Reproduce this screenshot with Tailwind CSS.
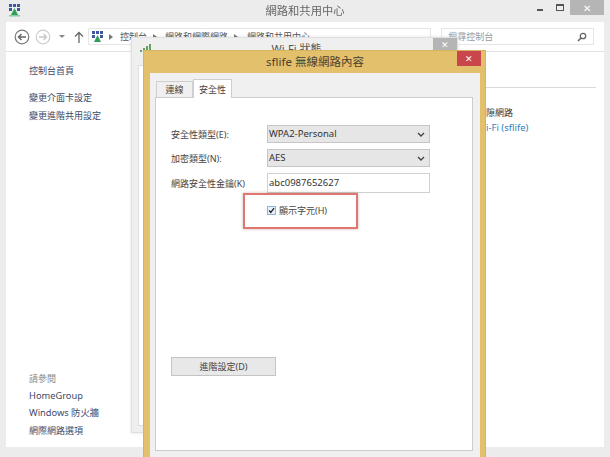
<!DOCTYPE html>
<html lang="zh-Hant">
<head>
    <meta charset="UTF-8">
    <title>網路和共用中心</title>
    <script src="https://cdn.jsdelivr.net/npm/@tailwindcss/browser@4"></script>
</head>
<body class="w-[610px] h-[457px] overflow-hidden bg-[#ececec] font-['Noto_Sans','Noto_Sans_CJK_TC',sans-serif] text-[10px] leading-none text-[#3c3c3c]">
    <div class="relative w-[610px] h-[457px] overflow-hidden blur-[0.35px]">
        <!-- main window -->
        <div class="flex flex-col h-full px-[6px]">
            <div class="relative flex items-center justify-center h-[22px] text-[11.3px] text-[#666]">
                <svg class="absolute left-[2px] top-[3px]" width="12" height="14" viewBox="0 0 12 14">
                    <rect x="1" y="1" width="3" height="3" fill="#3f56a8"/><rect x="5" y="1" width="3" height="3" fill="#3f56a8"/><rect x="9" y="1" width="3" height="3" fill="#3f56a8"/>
                    <rect x="1" y="5" width="3" height="3" fill="#3f56a8"/><rect x="9" y="5" width="3" height="3" fill="#3f56a8"/>
                    <path d="M6.5 5 L10 12 H3 Z" fill="#2f9e5a"/><rect x="1" y="12" width="11" height="1.5" fill="#8cc8a0"/>
                </svg>
                <span>網路和共用中心</span>
                <div class="absolute right-0 top-0 flex items-start">
                    <div class="w-[20px] h-[15px] flex items-center justify-center"><div class="w-[6px] h-[2px] mt-[5px] bg-[#555]"></div></div>
                    <div class="w-[20px] h-[15px] flex items-center justify-center"><div class="w-[8px] h-[7px] border border-[#555] border-t-2"></div></div>
                    <div class="w-[34px] h-[15px] bg-[#b5b5b5] flex items-center justify-center text-white text-[10px]">✕</div>
                </div>
            </div>
            <div class="flex items-center h-[30px] bg-white border-b border-[#e2e2e2] pl-[8px] pr-[10px]">
                <svg width="16" height="16" viewBox="0 0 16 16" fill="none"><circle cx="8" cy="8" r="6.8" stroke="#777" stroke-width="1.2"/><path d="M12 8H5M7.5 5 4.5 8l3 3" stroke="#666" stroke-width="1.4"/></svg>
                <svg class="ml-[5px]" width="16" height="16" viewBox="0 0 16 16" fill="none"><circle cx="8" cy="8" r="6.8" stroke="#ccc" stroke-width="1.2"/><path d="M4 8h7M8.5 5l3 3-3 3" stroke="#c8c8c8" stroke-width="1.4"/></svg>
                <svg class="ml-[8px]" width="7" height="4" viewBox="0 0 7 4"><path d="M0 0h6L3 3z" fill="#888"/></svg>
                <svg class="ml-[8px]" width="10" height="12" viewBox="0 0 10 12" fill="none"><path d="M5 12V2M1 5.5 5 1.5l4 4" stroke="#666" stroke-width="1.3"/></svg>
                <div class="flex items-center ml-[4px] w-[344px] h-[17px] border border-[#e6e6e6] text-[9px] text-[#555]">
                    <svg class="ml-[2px]" width="12" height="14" viewBox="0 0 12 14">
                        <rect x="1" y="1" width="3" height="3" fill="#3f56a8"/><rect x="5" y="1" width="3" height="3" fill="#3f56a8"/><rect x="9" y="1" width="3" height="3" fill="#3f56a8"/>
                        <rect x="1" y="5" width="3" height="3" fill="#3f56a8"/><rect x="9" y="5" width="3" height="3" fill="#3f56a8"/>
                        <path d="M6.5 5 L10 12 H3 Z" fill="#2f9e5a"/>
                    </svg>
                    <svg class="ml-[6px]" width="4" height="6" viewBox="0 0 4 6"><path d="M0 0l4 3-4 3z" fill="#777"/></svg>
                    <span class="ml-[7px]">控制台</span>
                    <svg class="ml-[6px]" width="4" height="6" viewBox="0 0 4 6"><path d="M0 0l4 3-4 3z" fill="#777"/></svg>
                    <span class="ml-[8px]">網路和網際網路</span>
                    <svg class="ml-[6px]" width="4" height="6" viewBox="0 0 4 6"><path d="M0 0l4 3-4 3z" fill="#777"/></svg>
                    <span class="ml-[9px]">網路和共用中心</span>
                </div>
                <div class="flex items-center justify-between ml-[10px] w-[153px] h-[17px] border border-[#e6e6e6] pl-[6px] pr-[6px] text-[9px] text-[#999]">
                    <span>搜尋控制台</span>
                    <svg width="10" height="10" viewBox="0 0 10 10" fill="none"><circle cx="6" cy="4" r="2.7" stroke="#666" stroke-width="1.3"/><path d="M4 6 1 9" stroke="#666" stroke-width="1.6"/></svg>
                </div>
            </div>
            <div class="relative flex-1 flex flex-col bg-white pl-[23px] pt-[14px] pb-[11px] text-[9px] text-[#3d4a6b]">
                <span class="h-[10px]">控制台首頁</span>
                <span class="h-[10px] mt-[17px]">變更介面卡設定</span>
                <span class="h-[10px] mt-[8px]">變更進階共用設定</span>
                <span class="h-[10px] mt-auto text-[#888]">請參閱</span>
                <span class="h-[10px] mt-[7px] text-[9.3px]">HomeGroup</span>
                <span class="h-[10px] mt-[7px] text-[9.3px]">Windows 防火牆</span>
                <span class="h-[10px] mt-[8px]">網際網路選項</span>
                <!-- bits of the main content showing right of the dialog -->
                <div class="absolute left-[480px] top-[35px] w-[110px] h-px bg-[#d9d9d9]"></div>
                <span class="absolute left-[480px] top-[56px] text-[#333]">隙網路</span>
                <span class="absolute left-[480px] top-[71px] text-[9.5px] text-[#2f7fc0]">i-Fi (sflife)</span>
            </div>
            <div class="h-[10px] shrink-0"></div>
        </div>

        <!-- Wi-Fi status window -->
        <div class="absolute left-[131px] top-[37px] w-[327px] h-[396px] bg-[#efefef] border border-[#e0e0e0] shadow-[0_0_3px_rgba(0,0,0,0.12)]">
            <div class="flex justify-center pt-[5px] text-[11px] text-[#555] pl-[4px]">Wi-Fi 狀態</div>
            <div class="absolute right-0 top-0 w-[24px] h-[13px] bg-[#b5b5b5] flex items-center justify-center text-white text-[9px]">✕</div>
            <div class="absolute left-[6px] top-[27px] bottom-[6px] w-[300px] bg-white border border-[#dedede]"></div>
            <svg class="absolute left-[8px] top-[5px]" width="12" height="10" viewBox="0 0 12 10" fill="none">
                <path d="M1 9V7M4 9V5M7 9V3M10 9V1" stroke="#3d8f3d" stroke-width="1.6"/>
            </svg>
        </div>

        <!-- sflife dialog -->
        <div class="absolute left-[143px] top-[50px] w-[343px] h-[420px] flex flex-col bg-[#e2c06c] border border-[#d6b35f] pl-[6px] pr-[5px]">
            <div class="relative flex items-center justify-center h-[22px] shrink-0 text-[11.5px] text-[#4a4030]">
                <span>sflife 無線網路內容</span>
                <div class="absolute right-[-1px] top-0 w-[24px] h-[15px] bg-[#c9474a] flex items-center justify-center text-white text-[9px]">✕</div>
            </div>
            <div class="flex-1 flex flex-col bg-[#f0f0f0] pl-[5px] pr-[7px] pt-[6px] text-[9px] text-[#444]">
                <div class="flex items-end h-[18px] pl-[1px]">
                    <div class="flex items-center justify-center w-[37px] h-[16px] bg-[#f0f0f0] border border-b-0 border-[#cfcfcf]">連線</div>
                    <div class="relative z-10 flex items-center justify-center w-[39px] h-[19px] mb-[-1px] bg-white border border-b-0 border-[#cfcfcf]">安全性</div>
                </div>
                <div class="relative h-[354px] bg-white border border-[#cccccc] pl-[15px] pr-[42px] pt-[27px]">
                    <div class="grid grid-cols-[96px_1fr] items-center gap-y-[6px]">
                        <span>安全性類型(E):</span>
                        <div class="flex items-center justify-between h-[18px] bg-[#e6e6e6] border border-[#c6c6c6] px-[1px] pr-[4px] text-[9.5px] text-[#333]">
                            <span>WPA2-Personal</span>
                            <svg width="8" height="5" viewBox="0 0 8 5" fill="none"><path d="M1 1l3 3 3-3" stroke="#444" stroke-width="1.4"/></svg>
                        </div>
                        <span>加密類型(N):</span>
                        <div class="flex items-center justify-between h-[18px] bg-[#e6e6e6] border border-[#c6c6c6] px-[1px] pr-[4px] text-[9.5px] text-[#333]">
                            <span>AES</span>
                            <svg width="8" height="5" viewBox="0 0 8 5" fill="none"><path d="M1 1l3 3 3-3" stroke="#444" stroke-width="1.4"/></svg>
                        </div>
                        <span>網路安全性金鑰(K)</span>
                        <div class="flex items-center h-[20px] bg-white border border-[#d0d0d0] px-[1px] text-[9.5px] text-[#333]">abc0987652627</div>
                    </div>
                    <div class="flex items-center ml-[96px] mt-[13px]">
                        <div class="flex items-center justify-center w-[9px] h-[9px] bg-[#e8f1fb] border border-[#8fb4dc]">
                            <svg width="9" height="9" viewBox="0 0 9 9" fill="none"><path d="M1.5 4.5 3.6 7 7.8 1.5" stroke="#222" stroke-width="1.7"/></svg>
                        </div>
                        <span class="ml-[3px]">顯示字元(H)</span>
                    </div>
                    <div class="flex items-center justify-center w-[105px] h-[19px] mt-[142px] bg-[#e8e8e8] border border-[#c4c4c4]">進階設定(D)</div>
                    <!-- red highlight drawn on the screenshot -->
                    <div class="absolute left-[87px] top-[95px] w-[115px] h-[36px] border-2 border-[#e0766f] shadow-[0_0_3px_rgba(120,60,60,0.35)]"></div>
                </div>
            </div>
        </div>
    </div>
</body>
</html>
